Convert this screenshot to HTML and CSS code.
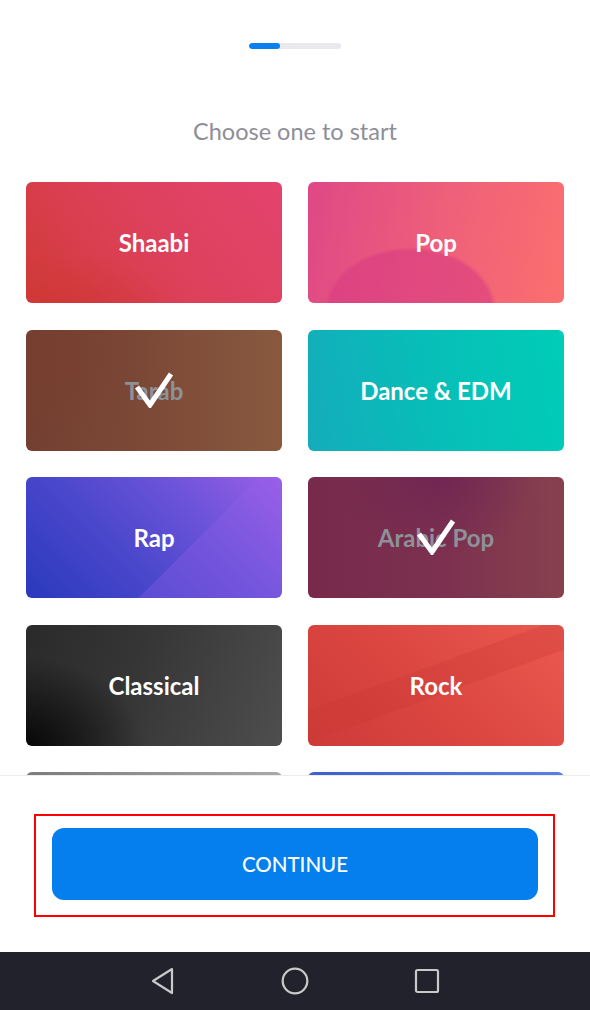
FILE: index.html
```html
<!DOCTYPE html>
<html lang="en">
<head>
<meta charset="utf-8">
<title>Choose one to start</title>
<link rel="stylesheet" href="styles.css">
</head>
<body>
<div class="screen">
  <main class="content">
    <div class="progress"><div class="progress-fill"></div></div>
    <h1 class="title">Choose one to start</h1>
    <div class="grid">
      <div class="card shaabi"><span class="label">Shaabi</span></div>
      <div class="card pop"><span class="label">Pop</span></div>
      <div class="card tarab selected"><span class="label">Tarab</span>
        <svg class="check" viewBox="0 0 40 36" width="40" height="36"><path d="M3 15 L16 33 L37 2" fill="none" stroke="#fff" stroke-width="5" stroke-linejoin="miter"/></svg>
      </div>
      <div class="card dance"><span class="label">Dance &amp; EDM</span></div>
      <div class="card rap"><span class="label">Rap</span></div>
      <div class="card arabic selected"><span class="label">Arabic Pop</span>
        <svg class="check" viewBox="0 0 40 36" width="40" height="36"><path d="M3 15 L16 33 L37 2" fill="none" stroke="#fff" stroke-width="5" stroke-linejoin="miter"/></svg>
      </div>
      <div class="card classical"><span class="label">Classical</span></div>
      <div class="card rock"><span class="label">Rock</span></div>
      <div class="card grey"></div>
      <div class="card blue"></div>
    </div>
  </main>
  <footer class="footer">
    <div class="highlight">
      <button class="continue">CONTINUE</button>
    </div>
  </footer>
  <nav class="navbar">
    <svg class="nav-icon" viewBox="0 0 26 28" width="26" height="28"><path d="M22 2 L3 14 L22 26 Z" fill="none" stroke="#c9c9c9" stroke-width="2.2" stroke-linejoin="round"/></svg>
    <svg class="nav-icon" viewBox="0 0 28 28" width="28" height="28"><circle cx="14" cy="14" r="12.3" fill="none" stroke="#c9c9c9" stroke-width="2.2"/></svg>
    <svg class="nav-icon" viewBox="0 0 26 26" width="26" height="26"><rect x="2" y="2" width="22" height="22" rx="1.5" fill="none" stroke="#c9c9c9" stroke-width="2.2"/></svg>
  </nav>
</div>
</body>
</html>
```

FILE: styles.css
```css
* { box-sizing: border-box; }
html, body { margin: 0; padding: 0; }
body {
  width: 590px;
  height: 1010px;
  overflow: hidden;
  background: #ffffff;
  font-family: Lato, "Open Sans", "Noto Sans", "Liberation Sans", sans-serif;
}
.screen {
  display: flex;
  flex-direction: column;
  height: 1010px;
}
.content {
  height: 775px;
  flex: none;
  overflow: hidden;
  display: flex;
  flex-direction: column;
  align-items: center;
}
.content > * { flex: none; }
.progress {
  margin-top: 43px;
  width: 92px;
  height: 6px;
  border-radius: 3px;
  background: #e9e9ee;
  overflow: hidden;
}
.progress-fill {
  width: 31px;
  height: 100%;
  border-radius: 3px;
  background: #0a7ff0;
}
.title {
  margin: 68px 0 0;
  font-size: 23.5px;
  line-height: 28px;
  font-weight: 400;
  color: #8e8e98;
  letter-spacing: 0;
}
.grid {
  margin-top: 37px;
  width: 100%;
  padding: 0 26px;
  display: grid;
  grid-template-columns: 256px 256px;
  grid-auto-rows: 121px;
  column-gap: 26px;
  row-gap: 26.5px;
}
.card {
  position: relative;
  border-radius: 6px;
  display: flex;
  align-items: center;
  justify-content: center;
  overflow: hidden;
}
.label {
  color: #ffffff;
  font-size: 24px;
  font-weight: 700;
  letter-spacing: 0;
}
.selected .label { color: #8d9298; }
.check {
  position: absolute;
  left: 108px;
  top: 42px;
}
.shaabi {
  background:
    radial-gradient(ellipse 150px 80px at 18% 108%, rgba(205,52,48,0.55), transparent 75%),
    radial-gradient(ellipse 150px 110px at 100% 0%, rgba(228,66,108,0.5), transparent 72%),
    linear-gradient(55deg, #d03a37 0%, #dc4058 45%, #e3446d 100%);
}
.pop {
  background:
    radial-gradient(ellipse 90px 66px at 40% 106%, rgba(214,56,130,0.55) 90%, transparent 96%),
    linear-gradient(100deg, #df4886 0%, #ee5f7a 50%, #fb6f6e 100%);
}
.tarab {
  background:
    radial-gradient(ellipse 130px 120px at 10% 20%, rgba(120,62,48,0.6), transparent 80%),
    linear-gradient(90deg, #733f31 0%, #7d4a37 50%, #89593f 100%);
}
.dance {
  background:
    linear-gradient(80deg, #14acbb 0%, #08bdb8 45%, #00cdb7 100%);
}
.rap {
  background:
    linear-gradient(135deg, transparent 62%, rgba(150,95,235,0.3) 62%),
    linear-gradient(45deg, #2a39bc 0%, #4c48cc 40%, #6e54da 70%, #9d5fe8 100%);
}
.arabic {
  background:
    radial-gradient(ellipse 110px 90px at 50% 0%, rgba(108,34,84,0.7), transparent 90%),
    linear-gradient(90deg, #772a4c 0%, #7d314f 55%, #87414d 100%);
}
.classical {
  background:
    radial-gradient(ellipse 150px 110px at 0% 100%, rgba(0,0,0,0.85), transparent 80%),
    linear-gradient(110deg, #2a2a2a 0%, #353535 40%, #4e4e4e 100%);
}
.rock {
  background:
    linear-gradient(160deg, transparent 40%, rgba(200,55,50,0.3) 40%, rgba(200,55,50,0.3) 55%, transparent 55%),
    linear-gradient(45deg, #cd3b38 0%, #dd4742 50%, #ea5a50 100%);
}
.grey { background: linear-gradient(90deg, #7b7b7b, #a9a9a9); }
.blue { background: linear-gradient(90deg, #3d5fcf, #5b7ee6); }
.footer {
  height: 177px;
  flex: none;
  border-top: 1px solid #ececec;
  background: #ffffff;
  padding: 38px 35px 0 34px;
}
.highlight {
  border: 2px solid #ff0000;
  height: 103px;
  padding: 12px 15px 0 16px;
}
.continue {
  width: 100%;
  height: 72px;
  border: none;
  border-radius: 12px;
  background: #047fed;
  color: #ffffff;
  font-family: Lato, "Open Sans", "Noto Sans", "Liberation Sans", sans-serif;
  font-size: 20.5px;
  font-weight: 500;
  letter-spacing: 0;
}
.navbar {
  height: 58px;
  flex: none;
  background: #22222c;
  display: flex;
  align-items: center;
  justify-content: center;
  gap: 105px;
}
```
